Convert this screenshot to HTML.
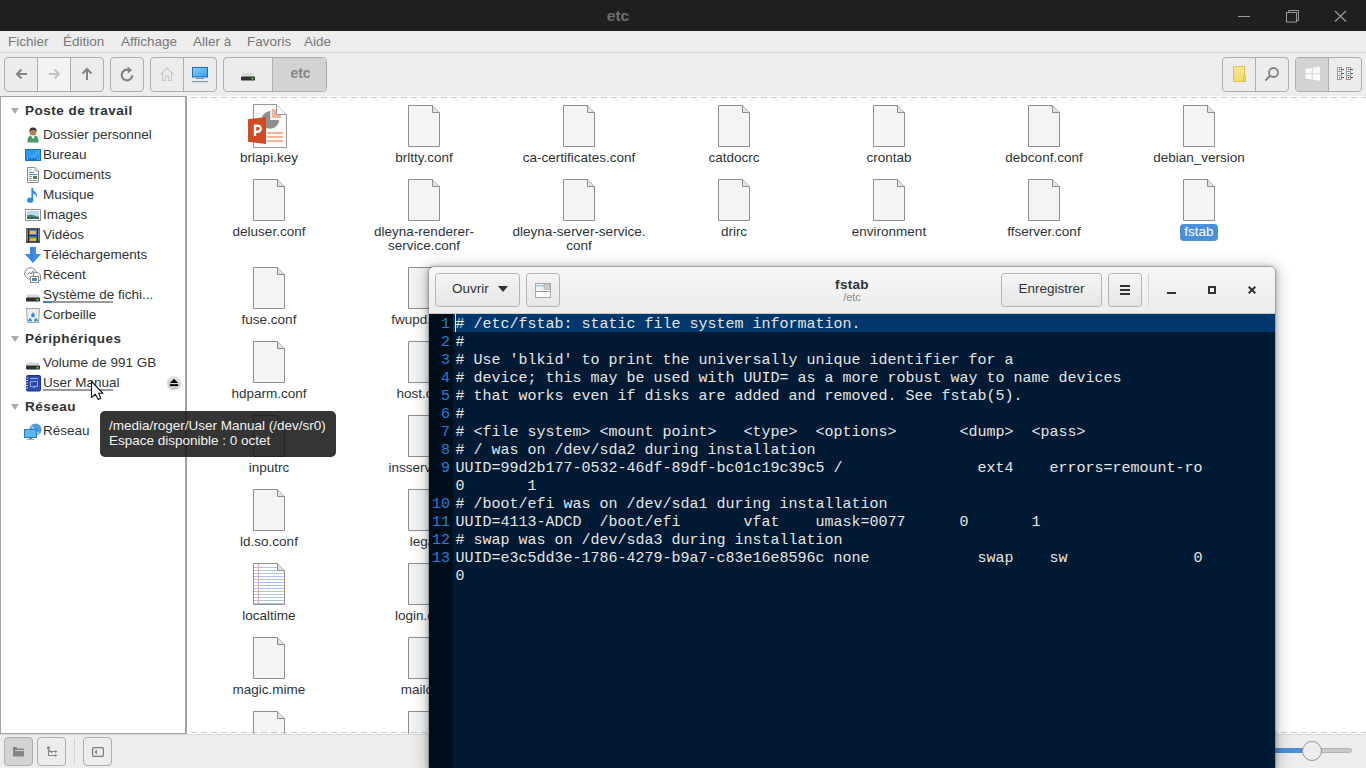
<!DOCTYPE html><html><head><meta charset="utf-8"><style>
*{margin:0;padding:0;box-sizing:border-box}
html,body{width:1366px;height:768px;overflow:hidden;background:#ededed;font-family:"Liberation Sans",sans-serif;font-size:13.5px;color:#2e3436}

body{position:relative}
.a{position:absolute}
svg{position:absolute;overflow:visible}
#title{left:0;top:0;width:1366px;height:31px;background:#1f1f1f}
#tt{left:518px;top:7px;width:200px;text-align:center;color:#6e6e6e;font-weight:bold;font-size:15.5px}
#menu{left:0;top:31px;width:1366px;height:22px;background:#ededed;border-bottom:1px solid #d4d4d4}
#menu span{position:absolute;top:3px;color:#787878;font-size:13.5px}
.btn{position:absolute;background:#ececec;border:1px solid #aeaeae;border-radius:4px}
.seg{position:absolute;top:0;bottom:0;border-left:1px solid #aeaeae}
#side{left:0;top:96px;width:187px;height:638px;background:#fff;border:1px solid #a3a3a3;border-right-width:2px}
.sh{position:absolute;left:25px;font-weight:bold;font-size:13.5px;color:#2e3436;line-height:16px;letter-spacing:0.5px}
.tri{position:absolute;left:11px;width:0;height:0;border-left:4.2px solid transparent;border-right:4.2px solid transparent;border-top:6px solid #ababab}
.si{position:absolute;left:43px;color:#2e3436;line-height:16px;white-space:nowrap}
#view{left:187px;top:96px;width:1179px;height:638px;background:#fff;overflow:hidden}
.dash{position:absolute;left:0;width:100%;height:1px;background:repeating-linear-gradient(90deg,transparent 0 4px,#c8c8c8 4px 10px)}
.lb{position:absolute;width:150px;text-align:center;color:#2e3436;line-height:14px;white-space:nowrap}
#status{left:0;top:734px;width:1366px;height:34px;background:#ededed;border-top:1px solid #d9d9d9}
#tip{left:100px;top:411px;width:236px;height:46px;background:rgba(20,20,20,0.86);border-radius:5px;color:#f2f2f2;padding:8px 0 0 9px;line-height:14.5px;font-size:13.5px;white-space:nowrap}
#ged{left:428px;top:266px;width:848px;height:503px;border:1px solid rgba(0,0,0,0.36);border-radius:6px 6px 0 0;overflow:hidden;box-shadow:0 1px 4px 1px rgba(0,0,0,0.18),0 2px 16px 2px rgba(0,0,0,0.22)}
#hb{left:0;top:0;width:846px;height:47px;background:linear-gradient(#f6f6f6,#ececec);border-bottom:1px solid #c9c9c9}
.gb{position:absolute;top:6px;height:34px;border:1px solid #b4b4b4;border-radius:3.5px;background:linear-gradient(#f4f4f4,#e6e6e6);color:#2e3436}
#txt{left:0;top:47px;width:846px;height:454px;background:#001a33}
#gut{left:0;top:0;width:24px;height:454px;background:#000e1c}
#hl{left:24px;top:0;width:822px;height:18px;background:#00386d}
.ln{position:absolute;width:21px;text-align:right;color:#1f80d8;font-family:"Liberation Mono",monospace;font-size:15px;line-height:18px}
.tl{position:absolute;left:26.5px;color:#e6e6e6;font-family:"Liberation Mono",monospace;font-size:15px;line-height:18px;white-space:pre}
</style></head><body><div id="title" class="a"></div><div id="tt" class="a">etc</div><svg style="left:1237px;top:10px" width="16" height="12"><line x1="1" y1="6.5" x2="13" y2="6.5" stroke="#9a9a9a" stroke-width="1"/></svg><svg style="left:1285px;top:9px" width="16" height="16"><rect x="1.5" y="3.5" width="10" height="9.5" fill="none" stroke="#9a9a9a"/><path d="M3.5 3.5V1.5H13.5V11.5H11.5" fill="none" stroke="#9a9a9a"/></svg><svg style="left:1334px;top:9px" width="14" height="14"><path d="M1 2L12 12.5M12 2L1 12.5" stroke="#9a9a9a" stroke-width="1.2"/></svg><div id="menu" class="a"><span style="left:8px">Fichier</span><span style="left:63px">Édition</span><span style="left:121px">Affichage</span><span style="left:193px">Aller à</span><span style="left:247px">Favoris</span><span style="left:304px">Aide</span></div><div class="btn" style="left:4px;top:57px;width:100px;height:35px"><div class="a" style="left:32px;top:0;width:33px;height:33px;background:#f3f3f3"></div><div class="seg" style="left:32px"></div><div class="seg" style="left:65px"></div></div><svg style="left:15px;top:67px" width="14" height="14"><path d="M2 7H12M6.5 2.5L2 7L6.5 11.5" fill="none" stroke="#7f8384" stroke-width="2"/></svg><svg style="left:48px;top:67px" width="14" height="14"><path d="M1 7H11M6.5 2.5L11 7L6.5 11.5" fill="none" stroke="#c2c4c4" stroke-width="2"/></svg><svg style="left:80px;top:67px" width="14" height="14"><path d="M7 13V2M2.5 6.5L7 2L11.5 6.5" fill="none" stroke="#7f8384" stroke-width="2"/></svg><div class="btn" style="left:110px;top:57px;width:34px;height:35px"></div><svg style="left:120px;top:66px" width="15" height="16"><path d="M12.3 9.2A5.3 5.3 0 1 1 8.5 3.9" fill="none" stroke="#808384" stroke-width="2.2"/><path d="M7.7 0.6L12.2 4.2L7.7 7.4Z" fill="#808384"/></svg><div class="btn" style="left:150px;top:57px;width:67px;height:35px"><div class="seg" style="left:32px"></div></div><svg style="left:159px;top:67px" width="16" height="15"><path d="M1.5 7.5L8 1L14.5 7.5M3.5 6V13.5H6.5V9H9.5V13.5H12.5V6" fill="none" stroke="#c6c6c6" stroke-width="1.1"/></svg><svg style="left:192px;top:67px" width="16" height="16"><defs><linearGradient id="scr" x1="0" y1="0" x2="1" y2="1"><stop offset="0" stop-color="#8fd0fb"/><stop offset="1" stop-color="#2e9ceb"/></linearGradient></defs><rect x="0.5" y="0.5" width="15" height="9.5" fill="url(#scr)" stroke="#1f6cae"/><rect x="4" y="11" width="8" height="1" fill="#6f98bd"/><rect x="0" y="14" width="16" height="1.2" fill="#7f9dbd"/></svg><div class="btn" style="left:223px;top:57px;width:104px;height:35px;overflow:hidden"><div class="a" style="left:48px;top:0;width:56px;height:33px;background:#d3d3d3;border-left:1px solid #aeaeae"></div><div class="a" style="left:49px;top:7px;width:55px;text-align:center;font-weight:bold;color:#858585;font-size:14px">etc</div></div><svg style="left:241px;top:73px" width="14" height="8"><rect x="1" y="0" width="12" height="5" rx="1" fill="#dcdcdc"/><rect x="0" y="3.5" width="14" height="4" rx="1" fill="#303030"/><rect x="10.5" y="4.8" width="2" height="1.6" fill="#3f3"/></svg><div class="btn" style="left:1222px;top:57px;width:67px;height:35px"><div class="seg" style="left:32px"></div></div><svg style="left:1233px;top:66px" width="14" height="16"><defs><linearGradient id="fold" x1="0" y1="0" x2="0" y2="1"><stop offset="0" stop-color="#fde796"/><stop offset="1" stop-color="#f7d765"/></linearGradient></defs><path d="M0.5 0.5H11.5V15.5H0.5Z" fill="url(#fold)" stroke="#e3c24c"/><path d="M10.5 9.5H12.5V15.5H10.5Z" fill="#f6d35c" stroke="#e3c24c"/></svg><svg style="left:1264px;top:66px" width="16" height="16"><circle cx="9.5" cy="6.5" r="4.5" fill="none" stroke="#7f8384" stroke-width="1.8"/><path d="M6 10L1.5 14.5" stroke="#7f8384" stroke-width="2"/></svg><div class="btn" style="left:1295px;top:57px;width:67px;height:35px;overflow:hidden"><div class="a" style="left:0;top:0;width:32px;height:33px;background:#d3d3d3"></div><div class="seg" style="left:32px"></div></div><svg style="left:1305px;top:67px" width="16" height="14"><path d="M0.5 2L6.8 1V6.3H0.5ZM7.8 0.8L15 -0.2V6.3H7.8ZM0.5 7.3H6.8V12.5L0.5 11.6ZM7.8 7.3H15V13.7L7.8 12.7Z" fill="#fafafa"/></svg><svg style="left:1336px;top:66px" width="19" height="15"><rect x="1.5" y="1.5" width="4" height="4" fill="#fff" stroke="#9a9a9a"/><rect x="1.5" y="5.5" width="4" height="4" fill="#fff" stroke="#9a9a9a"/><rect x="1.5" y="9.5" width="4" height="4" fill="#fff" stroke="#9a9a9a"/><rect x="3" y="3" width="1.2" height="1.2" fill="#3d6e52"/><rect x="3" y="7" width="1.2" height="1.2" fill="#3a8df0"/><rect x="3" y="11" width="1.2" height="1.2" fill="#e02b2b"/><path d="M5.5 3.5H8M5.5 7.5H8M5.5 11.5H8" stroke="#555" stroke-width="1"/><rect x="10.5" y="1.5" width="4" height="4" fill="#fff" stroke="#9a9a9a"/><rect x="10.5" y="5.5" width="4" height="4" fill="#fff" stroke="#9a9a9a"/><rect x="10.5" y="9.5" width="4" height="4" fill="#fff" stroke="#9a9a9a"/><rect x="12" y="3" width="1.2" height="1.2" fill="#3d6e52"/><rect x="12" y="7" width="1.2" height="1.2" fill="#3a8df0"/><rect x="12" y="11" width="1.2" height="1.2" fill="#e02b2b"/><path d="M14.5 3.5H17M14.5 7.5H17M14.5 11.5H17" stroke="#555" stroke-width="1"/></svg><div id="side" class="a"></div><div class="tri" style="top:108px"></div><div class="sh" style="top:103px">Poste de travail</div><div class="si" style="top:127px">Dossier personnel</div><div class="si" style="top:147px">Bureau</div><div class="si" style="top:167px">Documents</div><div class="si" style="top:187px">Musique</div><div class="si" style="top:207px">Images</div><div class="si" style="top:227px">Vidéos</div><div class="si" style="top:247px">Téléchargements</div><div class="si" style="top:267px">Récent</div><div class="si" style="top:287px">Système de fichi...</div><div class="si" style="top:307px">Corbeille</div><div class="tri" style="top:336px"></div><div class="sh" style="top:331px">Périphériques</div><div class="si" style="top:355px">Volume de 991 GB</div><div class="si" style="top:375px">User Manual</div><div class="tri" style="top:404px"></div><div class="sh" style="top:399px">Réseau</div><div class="si" style="top:423px">Réseau</div><div class="a" style="left:43px;top:301px;width:70px;height:2px;background:linear-gradient(90deg,#3584e4 0 9px,#9a9a9a 9px)"></div><div class="a" style="left:43px;top:389px;width:70px;height:2px;background:#9a9a9a"></div><svg style="left:26px;top:127px" width="14" height="16"><path d="M1.5 15.5Q1 10 4.5 8.5L7 10L9.5 8.5Q13 10 12.5 15.5Z" fill="#4a9a6a"/><path d="M5.2 9.2L7 12L8.8 9.2Z" fill="#fff"/><circle cx="7" cy="5" r="3.5" fill="#b38058"/><path d="M3.4 5Q3.2 0.5 7 0.6Q10.8 0.5 10.6 4.5Q9.5 2.6 7 3Q4.5 3 3.4 5Z" fill="#333"/></svg><svg style="left:25px;top:149px" width="16" height="12"><rect x="0.5" y="0.5" width="15" height="11" fill="#2b9af3" stroke="#1570d0"/><path d="M6 10L14 2" stroke="#5ab4fa" stroke-width="3" opacity="0.5"/><rect x="1" y="9.5" width="14" height="1" fill="#0b56a8"/><rect x="2" y="9.6" width="1" height="0.9" fill="#fff"/><rect x="12" y="9.6" width="1" height="0.9" fill="#fff"/><rect x="13.8" y="9.6" width="1" height="0.9" fill="#fff"/></svg><svg style="left:27px;top:167px" width="12" height="16"><path d="M0.5 0.5H8L11.5 4V15.5H0.5Z" fill="#fff" stroke="#8a8a8a"/><path d="M8 0.5V4H11.5" fill="#e6e6e6" stroke="#aaa"/><path d="M2.5 3.5L4 2M2 5.5H7M2 7.5H10" stroke="#3f84d6" stroke-width="1"/><path d="M2 9.5H5M2 11.5H5M2 13.5H10" stroke="#9a9a9a" stroke-width="1"/><rect x="6" y="9" width="4" height="3" fill="#4e8a4e"/></svg><svg style="left:27px;top:187px" width="11" height="16"><path d="M5.3 1V12.5" stroke="#2a8be6" stroke-width="1.8"/><ellipse cx="3.2" cy="13.2" rx="3.1" ry="2.6" fill="#2a8be6"/><path d="M5 0.5Q6 3.5 9 6Q11 8.5 9.5 11.5Q10.5 8 6 6.5Z" fill="#2a8be6"/></svg><svg style="left:25px;top:209px" width="16" height="12"><rect x="0.5" y="0.5" width="15" height="11" fill="#fff" stroke="#8f8f8f"/><rect x="2" y="2" width="12" height="8" fill="#b9d8ee"/><path d="M2 6.5Q6 5 9 6.5T14 7.5V10H2Z" fill="#4f7f62"/><path d="M2 8.5H14V10H2Z" fill="#2e5e7e"/></svg><svg style="left:26px;top:228px" width="14" height="15"><rect x="0.5" y="0.5" width="13" height="14" fill="#2a2a2a" stroke="#555"/><rect x="3" y="1.5" width="8" height="5.5" fill="#3a8ae0"/><rect x="4" y="3" width="6" height="3" fill="#e8c030"/><rect x="3" y="8" width="8" height="5.5" fill="#3a70d0"/><rect x="4" y="10" width="6" height="3" fill="#e8b030"/><path d="M1.3 1.5V2.5M1.3 3.5V4.5M1.3 5.5V6.5M1.3 7.5V8.5M1.3 9.5V10.5M1.3 11.5V12.5M12.7 1.5V2.5M12.7 3.5V4.5M12.7 5.5V6.5M12.7 7.5V8.5M12.7 9.5V10.5M12.7 11.5V12.5" stroke="#fff" stroke-width="1"/></svg><svg style="left:25px;top:247px" width="16" height="16"><path d="M5 0H11V7H16L8 16L0 7H5Z" fill="#3c8ee8"/><path d="M5 0H8V16L0 7H5Z" fill="#2f7fd8" opacity="0.5"/></svg><svg style="left:24px;top:267px" width="18" height="17"><circle cx="6.5" cy="6.5" r="5.8" fill="#f6f6f6" stroke="#8a8a8a"/><path d="M3.5 7.5L5.5 5.5L7 7L9.5 3.5" fill="none" stroke="#666"/><path d="M9.5 5.5H14L16.5 8V13.5H9.5Z" fill="#fafafa" stroke="#8a8a8a"/><rect x="6.5" y="9.5" width="8" height="6" fill="#fff" stroke="#8a8a8a"/><rect x="8" y="11" width="5" height="3" fill="#5a8ab0"/></svg><svg style="left:26px;top:294px" width="14" height="8"><rect x="0.5" y="0.5" width="13" height="7" rx="1.5" fill="#d8d8d8"/><rect x="0" y="3.5" width="14" height="4" rx="1" fill="#303030"/><rect x="10.5" y="4.8" width="2" height="1.6" fill="#3f3"/></svg><svg style="left:26px;top:308px" width="14" height="15"><path d="M0.5 0.5H13.5L12.5 14.5H1.5Z" fill="#efefef" stroke="#a0a0a0"/><path d="M7 6L9 9H5Z M4 10L3 12.5H6Z M10 10L11 12.5H8Z" fill="#2a8ae6"/><path d="M5.5 7.5L7 5.5L8.5 7.5M4 10.5L3.2 12.5H6M10 10.5L10.8 12.5H8" fill="none" stroke="#2a8ae6" stroke-width="1.6"/></svg><svg style="left:26px;top:362px" width="14" height="8"><rect x="0.5" y="0.5" width="13" height="7" rx="1.5" fill="#d8d8d8"/><rect x="0" y="3.5" width="14" height="4" rx="1" fill="#303030"/><rect x="10.5" y="4.8" width="2" height="1.6" fill="#3f3"/></svg><svg style="left:25px;top:375px" width="16" height="17"><rect x="1.5" y="0.5" width="14" height="15.5" rx="1.2" fill="#2a4cae" stroke="#1a3590"/><path d="M0.5 3H3M0.5 5.5H3M0.5 8H3M0.5 10.5H3M0.5 13H3" stroke="#c8d0e8" stroke-width="1"/><rect x="5" y="3" width="8" height="1" fill="#aab8e0"/><rect x="5.5" y="6.5" width="7" height="5" fill="none" stroke="#8fa2d8"/><rect x="8" y="12" width="2" height="1" fill="#8fa2d8"/></svg><svg style="left:167px;top:376px" width="14" height="14"><defs><linearGradient id="ej" x1="0" y1="0" x2="0" y2="1"><stop offset="0" stop-color="#e4e4e4"/><stop offset="1" stop-color="#c4c4c4"/></linearGradient></defs><circle cx="7" cy="7" r="7" fill="url(#ej)"/><path d="M2.9 6.9L7 2.8L11.1 6.9Z" fill="#000"/><rect x="2.9" y="8.2" width="8.2" height="1.8" fill="#000"/></svg><svg style="left:24px;top:423px" width="18" height="17"><circle cx="11.5" cy="6.5" r="6" fill="#4f9ad8"/><path d="M7 3Q11 5 9 9Q13 8 15 11" fill="none" stroke="#9cd0f4" stroke-width="1.5"/><rect x="0.5" y="6.5" width="12" height="8" fill="#5cb6f2" stroke="#2c7cc0"/><rect x="5" y="15" width="3" height="1" fill="#888"/><rect x="3" y="16" width="7" height="1" fill="#aaa"/></svg><div id="view" class="a"><svg style="left:60px;top:8px" width="41" height="45"><path d="M6.5 0.5H29.5L39.5 10.5V43.5H6.5Z" fill="#fbfbfb" stroke="#979797"/><path d="M23.3 15.9V7.1A8.8 8.8 0 1 0 32.1 15.9Z" fill="#8f8f8f"/><path d="M24.8 4.8A9.2 9.2 0 0 1 34 14H24.8Z" fill="#f4b49a"/><path d="M29.5 0.5V10.5H39.5" fill="#fbfbfb" stroke="#979797"/><path d="M20 29H36M20 33H36M20 37H36" stroke="#f4b49a" stroke-width="2"/><path d="M1 15.3L19 13V40L1 37.7Z" fill="#d04a26"/><path d="M8 32V21.8H10.8A3 3 0 0 1 10.8 27.8H9" fill="none" stroke="#fff" stroke-width="2.4"/></svg><div class="lb" style="left:7px;top:55px">brlapi.key</div><svg style="left:221px;top:9px" width="33" height="43"><defs></defs><path d="M0.5 0.5H24.5L31.5 7.5V41.5H0.5Z" fill="#f3f4f5" stroke="#8e8e8e"/><path d="M24.5 0.5V7.5H31.5" fill="#e2e2e2" stroke="#8e8e8e"/></svg><div class="lb" style="left:162px;top:55px">brltty.conf</div><svg style="left:376px;top:9px" width="33" height="43"><defs></defs><path d="M0.5 0.5H24.5L31.5 7.5V41.5H0.5Z" fill="#f3f4f5" stroke="#8e8e8e"/><path d="M24.5 0.5V7.5H31.5" fill="#e2e2e2" stroke="#8e8e8e"/></svg><div class="lb" style="left:317px;top:55px">ca-certificates.conf</div><svg style="left:531px;top:9px" width="33" height="43"><defs></defs><path d="M0.5 0.5H24.5L31.5 7.5V41.5H0.5Z" fill="#f3f4f5" stroke="#8e8e8e"/><path d="M24.5 0.5V7.5H31.5" fill="#e2e2e2" stroke="#8e8e8e"/></svg><div class="lb" style="left:472px;top:55px">catdocrc</div><svg style="left:686px;top:9px" width="33" height="43"><defs></defs><path d="M0.5 0.5H24.5L31.5 7.5V41.5H0.5Z" fill="#f3f4f5" stroke="#8e8e8e"/><path d="M24.5 0.5V7.5H31.5" fill="#e2e2e2" stroke="#8e8e8e"/></svg><div class="lb" style="left:627px;top:55px">crontab</div><svg style="left:841px;top:9px" width="33" height="43"><defs></defs><path d="M0.5 0.5H24.5L31.5 7.5V41.5H0.5Z" fill="#f3f4f5" stroke="#8e8e8e"/><path d="M24.5 0.5V7.5H31.5" fill="#e2e2e2" stroke="#8e8e8e"/></svg><div class="lb" style="left:782px;top:55px">debconf.conf</div><svg style="left:996px;top:9px" width="33" height="43"><defs></defs><path d="M0.5 0.5H24.5L31.5 7.5V41.5H0.5Z" fill="#f3f4f5" stroke="#8e8e8e"/><path d="M24.5 0.5V7.5H31.5" fill="#e2e2e2" stroke="#8e8e8e"/></svg><div class="lb" style="left:937px;top:55px">debian_version</div><svg style="left:66px;top:83px" width="33" height="43"><defs></defs><path d="M0.5 0.5H24.5L31.5 7.5V41.5H0.5Z" fill="#f3f4f5" stroke="#8e8e8e"/><path d="M24.5 0.5V7.5H31.5" fill="#e2e2e2" stroke="#8e8e8e"/></svg><div class="lb" style="left:7px;top:129px">deluser.conf</div><svg style="left:221px;top:83px" width="33" height="43"><defs></defs><path d="M0.5 0.5H24.5L31.5 7.5V41.5H0.5Z" fill="#f3f4f5" stroke="#8e8e8e"/><path d="M24.5 0.5V7.5H31.5" fill="#e2e2e2" stroke="#8e8e8e"/></svg><div class="lb" style="left:162px;top:129px">dleyna-renderer-<br>service.conf</div><svg style="left:376px;top:83px" width="33" height="43"><defs></defs><path d="M0.5 0.5H24.5L31.5 7.5V41.5H0.5Z" fill="#f3f4f5" stroke="#8e8e8e"/><path d="M24.5 0.5V7.5H31.5" fill="#e2e2e2" stroke="#8e8e8e"/></svg><div class="lb" style="left:317px;top:129px">dleyna-server-service.<br>conf</div><svg style="left:531px;top:83px" width="33" height="43"><defs></defs><path d="M0.5 0.5H24.5L31.5 7.5V41.5H0.5Z" fill="#f3f4f5" stroke="#8e8e8e"/><path d="M24.5 0.5V7.5H31.5" fill="#e2e2e2" stroke="#8e8e8e"/></svg><div class="lb" style="left:472px;top:129px">drirc</div><svg style="left:686px;top:83px" width="33" height="43"><defs></defs><path d="M0.5 0.5H24.5L31.5 7.5V41.5H0.5Z" fill="#f3f4f5" stroke="#8e8e8e"/><path d="M24.5 0.5V7.5H31.5" fill="#e2e2e2" stroke="#8e8e8e"/></svg><div class="lb" style="left:627px;top:129px">environment</div><svg style="left:841px;top:83px" width="33" height="43"><defs></defs><path d="M0.5 0.5H24.5L31.5 7.5V41.5H0.5Z" fill="#f3f4f5" stroke="#8e8e8e"/><path d="M24.5 0.5V7.5H31.5" fill="#e2e2e2" stroke="#8e8e8e"/></svg><div class="lb" style="left:782px;top:129px">ffserver.conf</div><svg style="left:996px;top:83px" width="33" height="43"><defs></defs><path d="M0.5 0.5H24.5L31.5 7.5V41.5H0.5Z" fill="#f3f4f5" stroke="#8e8e8e"/><path d="M24.5 0.5V7.5H31.5" fill="#e2e2e2" stroke="#8e8e8e"/></svg><div class="a" style="left:993px;top:128px;width:38px;height:17px;background:#4a8fdb;border-radius:4px"></div><div class="lb" style="left:937px;top:129px;color:#fff">fstab</div><svg style="left:66px;top:171px" width="33" height="43"><defs></defs><path d="M0.5 0.5H24.5L31.5 7.5V41.5H0.5Z" fill="#f3f4f5" stroke="#8e8e8e"/><path d="M24.5 0.5V7.5H31.5" fill="#e2e2e2" stroke="#8e8e8e"/></svg><div class="lb" style="left:7px;top:217px">fuse.conf</div><svg style="left:221px;top:171px" width="33" height="43"><defs></defs><path d="M0.5 0.5H24.5L31.5 7.5V41.5H0.5Z" fill="#f3f4f5" stroke="#8e8e8e"/><path d="M24.5 0.5V7.5H31.5" fill="#e2e2e2" stroke="#8e8e8e"/></svg><div class="lb" style="left:162px;top:217px">fwupd.conf</div><svg style="left:66px;top:245px" width="33" height="43"><defs></defs><path d="M0.5 0.5H24.5L31.5 7.5V41.5H0.5Z" fill="#f3f4f5" stroke="#8e8e8e"/><path d="M24.5 0.5V7.5H31.5" fill="#e2e2e2" stroke="#8e8e8e"/></svg><div class="lb" style="left:7px;top:291px">hdparm.conf</div><svg style="left:221px;top:245px" width="33" height="43"><defs></defs><path d="M0.5 0.5H24.5L31.5 7.5V41.5H0.5Z" fill="#f3f4f5" stroke="#8e8e8e"/><path d="M24.5 0.5V7.5H31.5" fill="#e2e2e2" stroke="#8e8e8e"/></svg><div class="lb" style="left:162px;top:291px">host.conf</div><svg style="left:66px;top:319px" width="33" height="43"><defs></defs><path d="M0.5 0.5H24.5L31.5 7.5V41.5H0.5Z" fill="#f3f4f5" stroke="#8e8e8e"/><path d="M24.5 0.5V7.5H31.5" fill="#e2e2e2" stroke="#8e8e8e"/></svg><div class="lb" style="left:7px;top:365px">inputrc</div><svg style="left:221px;top:319px" width="33" height="43"><defs></defs><path d="M0.5 0.5H24.5L31.5 7.5V41.5H0.5Z" fill="#f3f4f5" stroke="#8e8e8e"/><path d="M24.5 0.5V7.5H31.5" fill="#e2e2e2" stroke="#8e8e8e"/></svg><div class="lb" style="left:162px;top:365px">insserv.conf</div><svg style="left:66px;top:393px" width="33" height="43"><defs></defs><path d="M0.5 0.5H24.5L31.5 7.5V41.5H0.5Z" fill="#f3f4f5" stroke="#8e8e8e"/><path d="M24.5 0.5V7.5H31.5" fill="#e2e2e2" stroke="#8e8e8e"/></svg><div class="lb" style="left:7px;top:439px">ld.so.conf</div><svg style="left:221px;top:393px" width="33" height="43"><defs></defs><path d="M0.5 0.5H24.5L31.5 7.5V41.5H0.5Z" fill="#f3f4f5" stroke="#8e8e8e"/><path d="M24.5 0.5V7.5H31.5" fill="#e2e2e2" stroke="#8e8e8e"/></svg><div class="lb" style="left:162px;top:439px">legal</div><svg style="left:66px;top:467px" width="33" height="43"><path d="M0.5 0.5H24.5L31.5 7.5V41.5H0.5Z" fill="#fff" stroke="#8e8e8e"/><path d="M1 4.5H24" stroke="#a9c6ea" stroke-width="1"/><path d="M1 7.5H24" stroke="#a9c6ea" stroke-width="1"/><path d="M1 10.5H31" stroke="#a9c6ea" stroke-width="1"/><path d="M1 13.5H31" stroke="#a9c6ea" stroke-width="1"/><path d="M1 16.5H31" stroke="#a9c6ea" stroke-width="1"/><path d="M1 19.5H31" stroke="#a9c6ea" stroke-width="1"/><path d="M1 22.5H31" stroke="#a9c6ea" stroke-width="1"/><path d="M1 25.5H31" stroke="#a9c6ea" stroke-width="1"/><path d="M1 28.5H31" stroke="#a9c6ea" stroke-width="1"/><path d="M1 31.5H31" stroke="#a9c6ea" stroke-width="1"/><path d="M1 34.5H31" stroke="#a9c6ea" stroke-width="1"/><path d="M1 37.5H31" stroke="#a9c6ea" stroke-width="1"/><path d="M1 40.5H31" stroke="#a9c6ea" stroke-width="1"/><path d="M5.5 1V41" stroke="#eaa3a3" stroke-width="1"/><path d="M24.5 0.5V7.5H31.5" fill="#e2e2e2" stroke="#8e8e8e"/></svg><div class="lb" style="left:7px;top:513px">localtime</div><svg style="left:221px;top:467px" width="33" height="43"><defs></defs><path d="M0.5 0.5H24.5L31.5 7.5V41.5H0.5Z" fill="#f3f4f5" stroke="#8e8e8e"/><path d="M24.5 0.5V7.5H31.5" fill="#e2e2e2" stroke="#8e8e8e"/></svg><div class="lb" style="left:162px;top:513px">login.defs</div><svg style="left:66px;top:541px" width="33" height="43"><defs></defs><path d="M0.5 0.5H24.5L31.5 7.5V41.5H0.5Z" fill="#f3f4f5" stroke="#8e8e8e"/><path d="M24.5 0.5V7.5H31.5" fill="#e2e2e2" stroke="#8e8e8e"/></svg><div class="lb" style="left:7px;top:587px">magic.mime</div><svg style="left:221px;top:541px" width="33" height="43"><defs></defs><path d="M0.5 0.5H24.5L31.5 7.5V41.5H0.5Z" fill="#f3f4f5" stroke="#8e8e8e"/><path d="M24.5 0.5V7.5H31.5" fill="#e2e2e2" stroke="#8e8e8e"/></svg><div class="lb" style="left:162px;top:587px">mailcap</div><svg style="left:66px;top:615px" width="33" height="43"><defs></defs><path d="M0.5 0.5H24.5L31.5 7.5V41.5H0.5Z" fill="#f3f4f5" stroke="#8e8e8e"/><path d="M24.5 0.5V7.5H31.5" fill="#e2e2e2" stroke="#8e8e8e"/></svg><svg style="left:221px;top:615px" width="33" height="43"><defs></defs><path d="M0.5 0.5H24.5L31.5 7.5V41.5H0.5Z" fill="#f3f4f5" stroke="#8e8e8e"/><path d="M24.5 0.5V7.5H31.5" fill="#e2e2e2" stroke="#8e8e8e"/></svg><div class="dash" style="top:1px"></div><div class="dash" style="top:636px"></div></div><div id="status" class="a"></div><div class="btn" style="left:4px;top:737px;width:29px;height:29px;background:#d3d3d3"></div><svg style="left:13px;top:747px" width="12" height="10"><rect x="0" y="0" width="4" height="2" fill="#858585"/><rect x="0" y="1.5" width="11" height="8" fill="#858585"/><rect x="2" y="3" width="9" height="1" fill="#cfcfcf"/></svg><div class="btn" style="left:37px;top:737px;width:29px;height:29px"></div><svg style="left:46px;top:746px" width="12" height="11"><circle cx="2.5" cy="1.8" r="1.6" fill="#888"/><path d="M2.5 2V9.5H9.5M2.5 5.5H9.5M3.5 4.2L6 6.8" fill="none" stroke="#888" stroke-width="1.1"/><path d="M9 4L11.5 5.5L9 7ZM9 8L11.5 9.5L9 11Z" fill="#888"/></svg><div class="a" style="left:74px;top:738px;width:1px;height:27px;background:#d0d0d0"></div><div class="btn" style="left:83px;top:737px;width:29px;height:29px"></div><svg style="left:92px;top:747px" width="12" height="10"><rect x="0.6" y="0.6" width="10.8" height="8.8" rx="1" fill="none" stroke="#7d7d7d" stroke-width="1.2"/><path d="M2.5 5L5 2.5V7.5Z" fill="#7d7d7d"/></svg><div class="a" style="left:1275px;top:748px;width:77px;height:5px;border-radius:3px;background:#c8c8c8;border:1px solid #b4b4b4"></div><div class="a" style="left:1275px;top:748px;width:30px;height:5px;background:#4a8fdb"></div><div class="a" style="left:1302px;top:741px;width:20px;height:20px;border-radius:50%;background:#ececec;border:1px solid #979797"></div><div id="tip" class="a">/media/roger/User Manual (/dev/sr0)<br>Espace disponible : 0 octet</div><div id="ged" class="a"><div id="hb" class="a"><div class="gb" style="left:6px;width:85px"><div class="a" style="left:16px;top:7px">Ouvrir</div><svg style="left:62px;top:12px" width="10" height="6"><path d="M0 0H10L5 6Z" fill="#2e3436"/></svg></div><div class="gb" style="left:97px;width:34px"><svg style="left:8px;top:9px" width="16" height="15"><rect x="0.5" y="0.5" width="15" height="14" fill="#fbfbfb" stroke="#a8a8a8"/><rect x="1" y="1" width="8" height="7" fill="#eef4fc"/><rect x="1" y="2" width="8" height="1.5" fill="#a9c9f2"/><rect x="9" y="1" width="6" height="5.5" fill="#cfcac4" stroke="#aaa" stroke-width="0.6"/><path d="M1 8.5H15" stroke="#9a9a9a"/></svg></div><div class="a" style="left:0;top:10px;width:846px;text-align:center;font-weight:bold;font-size:13.5px;letter-spacing:0.3px;color:#2e3436">fstab</div><div class="a" style="left:0;top:24px;width:846px;text-align:center;font-size:11px;color:#8a8a8a">/etc</div><div class="gb" style="left:572px;width:101px;text-align:center;line-height:29px">Enregistrer</div><div class="gb" style="left:679px;width:34px"><svg style="left:9px;top:10px" width="14" height="12"><path d="M2 2H12M2 6H12M2 10H12" stroke="#2e3436" stroke-width="2"/></svg></div><div class="a" style="left:719px;top:7px;width:1px;height:32px;background:#d4d4d4"></div><svg style="left:738px;top:25px" width="10" height="3"><rect x="0" y="0" width="9" height="2" fill="#2e3436"/></svg><svg style="left:779px;top:19px" width="8" height="8"><rect x="1" y="1" width="6" height="6" fill="none" stroke="#2e3436" stroke-width="2"/></svg><svg style="left:819px;top:19px" width="8" height="8"><path d="M0.7 0.7L7.3 7.3M7.3 0.7L0.7 7.3" stroke="#2e3436" stroke-width="2"/></svg></div><div id="txt" class="a"><div id="gut" class="a"></div><div id="hl" class="a"></div><div class="ln" style="left:0;top:2px">1</div><div class="tl" style="top:2px"># /etc/fstab: static file system information.</div><div class="ln" style="left:0;top:20px">2</div><div class="tl" style="top:20px">#</div><div class="ln" style="left:0;top:38px">3</div><div class="tl" style="top:38px"># Use &#x27;blkid&#x27; to print the universally unique identifier for a</div><div class="ln" style="left:0;top:56px">4</div><div class="tl" style="top:56px"># device; this may be used with UUID= as a more robust way to name devices</div><div class="ln" style="left:0;top:74px">5</div><div class="tl" style="top:74px"># that works even if disks are added and removed. See fstab(5).</div><div class="ln" style="left:0;top:92px">6</div><div class="tl" style="top:92px">#</div><div class="ln" style="left:0;top:110px">7</div><div class="tl" style="top:110px"># &lt;file system&gt; &lt;mount point&gt;   &lt;type&gt;  &lt;options&gt;       &lt;dump&gt;  &lt;pass&gt;</div><div class="ln" style="left:0;top:128px">8</div><div class="tl" style="top:128px"># / was on /dev/sda2 during installation</div><div class="ln" style="left:0;top:146px">9</div><div class="tl" style="top:146px">UUID=99d2b177-0532-46df-89df-bc01c19c39c5 /               ext4    errors=remount-ro</div><div class="tl" style="top:164px">0       1</div><div class="ln" style="left:0;top:182px">10</div><div class="tl" style="top:182px"># /boot/efi was on /dev/sda1 during installation</div><div class="ln" style="left:0;top:200px">11</div><div class="tl" style="top:200px">UUID=4113-ADCD  /boot/efi       vfat    umask=0077      0       1</div><div class="ln" style="left:0;top:218px">12</div><div class="tl" style="top:218px"># swap was on /dev/sda3 during installation</div><div class="ln" style="left:0;top:236px">13</div><div class="tl" style="top:236px">UUID=e3c5dd3e-1786-4279-b9a7-c83e16e8596c none            swap    sw              0</div><div class="tl" style="top:254px">0</div><div class="a" style="left:26px;top:0;width:1px;height:18px;background:#f0f0f0"></div></div></div><svg style="left:91px;top:381px" width="14" height="20"><path d="M0.5 0.5V16.5L4.4 13.2L7.3 18.5L9.8 17.2L7.6 12.3H12Z" fill="#fff" stroke="#111" stroke-width="1.1" stroke-linejoin="round"/></svg></body></html>
